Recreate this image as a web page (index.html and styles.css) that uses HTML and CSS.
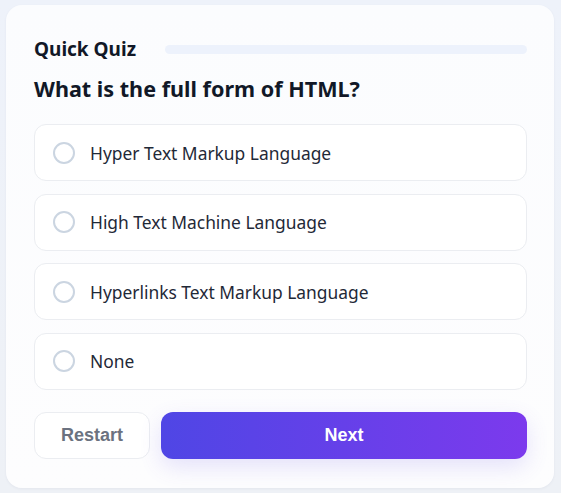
FILE: index.html
```html
<!DOCTYPE html>
<html>
<head>
<meta charset="utf-8">
<link rel="stylesheet" href="styles.css">
</head>
<body>
<div class="card">
  <div class="header">
    <h1 class="title">Quick Quiz</h1>
    <div class="progress"><div class="progress-fill"></div></div>
  </div>
  <h2 class="question">What is the full form of HTML?</h2>
  <div class="options">
    <div class="option"><span class="radio"></span><span class="label">Hyper Text Markup Language</span></div>
    <div class="option"><span class="radio"></span><span class="label">High Text Machine Language</span></div>
    <div class="option"><span class="radio"></span><span class="label">Hyperlinks Text Markup Language</span></div>
    <div class="option"><span class="radio"></span><span class="label">None</span></div>
  </div>
  <div class="actions">
    <button class="btn btn-restart">Restart</button>
    <button class="btn btn-next">Next</button>
  </div>
</div>
</body>
</html>
```
FILE: styles.css
```css
html, body {
  margin: 0;
  padding: 0;
}
body {
  width: 561px;
  height: 493px;
  background: linear-gradient(180deg, #eef2fa 0%, #eef1f6 100%);
  font-family: "Noto Sans", sans-serif;
  box-sizing: border-box;
  padding: 5px 7px 5px 6px;
  overflow: hidden;
}
.card {
  height: 483px;
  box-sizing: border-box;
  background: linear-gradient(180deg, #fbfcfe 0%, #fdfdfe 100%);
  border-radius: 16px;
  padding: 32px 27px 0 28px;
  box-shadow: 0 1px 3px rgba(30, 40, 80, 0.05);
}
.header {
  display: flex;
  align-items: center;
  gap: 29px;
  height: 24px;
}
.title {
  margin: 0;
  font-size: 19px;
  font-weight: 700;
  color: #111827;
  line-height: 24px;
  white-space: nowrap;
}
.progress {
  flex: 1;
  height: 9px;
  border-radius: 5px;
  background: #edf2fc;
}
.question {
  margin: 14px 0 21px;
  font-size: 21.6px;
  font-weight: 700;
  color: #111827;
  line-height: 28px;
}
.options {
  display: flex;
  flex-direction: column;
  gap: 12.67px;
}
.option {
  height: 57px;
  box-sizing: border-box;
  border: 1px solid #ebedf1;
  border-radius: 12px;
  background: #ffffff;
  display: flex;
  align-items: center;
  padding-left: 18px;
  gap: 15px;
}
.radio {
  width: 22px;
  height: 22px;
  box-sizing: border-box;
  border: 2px solid #cbd5e1;
  border-radius: 50%;
  flex: none;
}
.label {
  font-size: 17.4px;
  color: #1f2937;
}
.actions {
  display: flex;
  gap: 11px;
  margin-top: 22px;
}
.btn {
  height: 47px;
  border-radius: 12px;
  font-family: "Liberation Sans", Arial, sans-serif;
  font-weight: 700;
  font-size: 18px;
  padding-top: 2px;
  cursor: pointer;
}
.btn-restart {
  width: 116px;
  background: #ffffff;
  border: 1px solid #ebedf1;
  color: #6b7280;
}
.btn-next {
  flex: 1;
  border: none;
  color: #ffffff;
  background: linear-gradient(90deg, #4f46e5 0%, #7c3aed 100%);
  box-shadow: 0 8px 22px rgba(99, 80, 230, 0.16);
}
```
